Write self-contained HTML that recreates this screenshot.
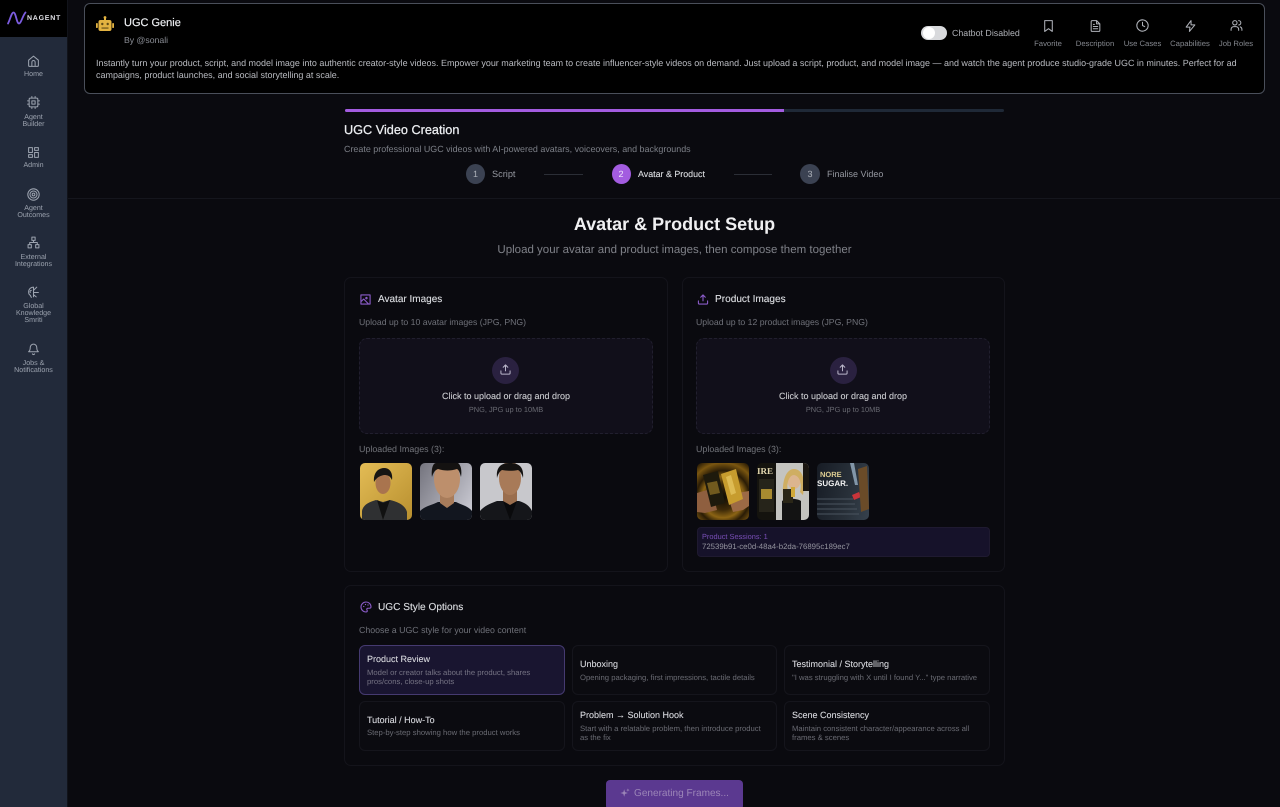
<!DOCTYPE html>
<html lang="en"><head><meta charset="utf-8"><title>UGC Genie</title>
<style>
*{box-sizing:border-box}
html,body{margin:0;padding:0;width:1280px;height:807px;overflow:hidden;background:#0a0a0f}
body{position:relative;font-family:"Liberation Sans",sans-serif;color:#e5e7eb;text-rendering:geometricPrecision}
.a,.t{position:absolute}
.t{white-space:nowrap;line-height:1}
.c{transform:translateX(-50%);text-align:center}
.nav{font-size:7.1px;color:#9ca3af;line-height:7px;text-align:center;width:67px;left:0;white-space:normal}
svg{position:absolute;overflow:visible}
.i{fill:none;stroke-linecap:round;stroke-linejoin:round}
.card{position:absolute;border:1px solid #14141b;border-radius:7px;background:#0a0a0f}
.drop{position:absolute;border:1px dashed #211f2e;border-radius:8px;background:#110f1a}
.circle{position:absolute;width:27px;height:27px;border-radius:50%;background:#2a2140}
.thumb{position:absolute;width:52px;height:57px;border-radius:5px;overflow:hidden}
.sty{position:absolute;border:1px solid #15151c;border-radius:6px;background:#0b0b10}
.h{font-size:9px;color:#d8d9de;-webkit-text-stroke:.1px #d8d9de}
.d{font-size:7.7px;color:#6a6b73}
.top{color:#85888f;font-size:7.7px}
</style></head><body>
<div class="a" style="left:0;top:0;width:67px;height:807px;background:#222a3a"></div>
<div class="a" style="left:0;top:0;width:67px;height:37px;background:#000"></div>
<div class="a" style="left:67px;top:0;width:1px;height:807px;background:#11131a"></div>

<svg style="left:7px;top:11px" width="20" height="14" viewBox="0 0 20 14"><path class="i" stroke="#7c5ce0" stroke-width="1.8" d="M1 12.500 C3 9 4.500 1.500 6.500 1.500 C9 1.500 9.500 12.500 12 12.500 C14 12.500 16 4 18.500 1.500"/></svg>
<div class="t" style="left:27px;top:15px;font-size:7px;font-weight:700;letter-spacing:.75px;color:#e0e0e6">NAGENT</div>

<svg style="left:27px;top:54px" width="13" height="14" viewBox="0 0 24 24"><path class="i" stroke="#9ca3af" stroke-width="1.9" d="M3 10.500 12 3l9 7.500V20a2 2 0 0 1-2 2H5a2 2 0 0 1-2-2Z M9 22v-8a3 3 0 0 1 6 0v8"/></svg>
<div class="t nav" style="top:71px">Home</div>
<svg style="left:27px;top:96px" width="13" height="13" viewBox="0 0 24 24"><path class="i" stroke="#9ca3af" stroke-width="1.9" d="M6 4h12a2 2 0 0 1 2 2v12a2 2 0 0 1-2 2H6a2 2 0 0 1-2-2V6a2 2 0 0 1 2-2Z M9 9h6v6H9Z M9 1v3M15 1v3M9 20v3M15 20v3M20 9h3M20 15h3M1 9h3M1 15h3"/></svg>
<div class="t nav" style="top:114px">Agent<br>Builder</div>
<svg style="left:27px;top:146px" width="13" height="13" viewBox="0 0 24 24"><path class="i" stroke="#9ca3af" stroke-width="1.9" d="M3 3h7v9H3Z M14 3h7v5h-7Z M14 12h7v9h-7Z M3 16h7v5H3Z"/></svg>
<div class="t nav" style="top:162px">Admin</div>
<svg style="left:27px;top:187.500px" width="13" height="13" viewBox="0 0 24 24"><g class="i" stroke="#9ca3af" stroke-width="1.9"><circle cx="12" cy="12" r="10.500"/><circle cx="12" cy="12" r="6.500"/><circle cx="12" cy="12" r="2.500"/></g></svg>
<div class="t nav" style="top:205px">Agent<br>Outcomes</div>
<svg style="left:27px;top:236px" width="13" height="13" viewBox="0 0 24 24"><path class="i" stroke="#9ca3af" stroke-width="1.9" d="M9 2h6v6H9Z M2 16h6v6H2Z M16 16h6v6h-6Z M5 16v-4h14v4M12 8v4"/></svg>
<div class="t nav" style="top:254px">External<br>Integrations</div>
<svg style="left:27px;top:285px" width="13" height="14" viewBox="0 0 24 24"><path class="i" stroke="#9ca3af" stroke-width="1.9" d="M12 3C7 3 3 7 3 12c0 3 1 5 3 6l2 4M12 3v18M12 9l6-6M12 13h9M12 17l5 4M8 9c-2 0-3 2-2 4"/></svg>
<div class="t nav" style="top:303px">Global<br>Knowledge<br>Smriti</div>
<svg style="left:27px;top:342px" width="13" height="14" viewBox="0 0 24 24"><path class="i" stroke="#9ca3af" stroke-width="1.9" d="M6 9a6 6 0 0 1 12 0c0 6 3 8 3 8H3s3-2 3-8M10 21a2.200 2.200 0 0 0 4 0"/></svg>
<div class="t nav" style="top:360px">Jobs &amp;<br>Notifications</div>

<div class="a" style="left:84px;top:3px;width:1181px;height:91px;background:#000;border:1px solid #4a4f5a;border-radius:6px"></div>
<svg style="left:96px;top:16px" width="18" height="16" viewBox="0 0 18 16"><g fill="#e3b341"><rect x="2.500" y="4" width="13" height="11" rx="2"/><rect y="7" width="1.800" height="5" rx=".8"/><rect x="16.200" y="7" width="1.800" height="5" rx=".8"/><rect x="8" y="1.500" width="2" height="3"/><circle cx="9" cy="1.500" r="1.400"/></g><circle cx="6.300" cy="8" r="1.200" fill="#5f4a14"/><circle cx="11.700" cy="8" r="1.200" fill="#5f4a14"/><rect x="5.500" y="11.500" width="7" height="1.100" fill="#5f4a14"/></svg>
<div class="t" style="left:124px;top:18px;font-size:11px;color:#eceef1;-webkit-text-stroke:.2px #eceef1">UGC Genie</div>
<div class="t" style="left:124px;top:35.500px;font-size:8.700px;color:#8a8d95">By @sonali</div>
<div class="t" style="left:96px;top:58.500px;font-size:8.980px;color:#babcc2">Instantly turn your product, script, and model image into authentic creator-style videos. Empower your marketing team to create influencer-style videos on demand. Just upload a script, product, and model image — and watch the agent produce studio-grade UGC in minutes. Perfect for ad</div>
<div class="t" style="left:96px;top:70.500px;font-size:8.980px;color:#babcc2">campaigns, product launches, and social storytelling at scale.</div>

<div class="a" style="left:921px;top:26px;width:26px;height:14px;border-radius:7px;background:#d8d9dc"></div>
<div class="a" style="left:923px;top:27px;width:12px;height:12px;border-radius:50%;background:#fff"></div>
<div class="t" style="left:952px;top:28.500px;font-size:8.850px;color:#b0b2b8">Chatbot Disabled</div>

<svg style="left:1042px;top:19px" width="13" height="14" viewBox="0 0 24 24"><path class="i" stroke="#b0b3ba" stroke-width="1.9" d="M5 2h14v20l-7-5-7 5Z"/></svg>
<svg style="left:1089px;top:19px" width="13" height="14" viewBox="0 0 24 24"><path class="i" stroke="#b0b3ba" stroke-width="1.9" d="M6 2h8l6 6v12a2 2 0 0 1-2 2H6a2 2 0 0 1-2-2V4a2 2 0 0 1 2-2Z M14 2v6h6 M8 13h8M8 17h8M8 9h2"/></svg>
<svg style="left:1136px;top:19px" width="13" height="13" viewBox="0 0 24 24"><g class="i" stroke="#b0b3ba" stroke-width="1.9"><circle cx="12" cy="12" r="10.500"/><path d="M12 6v6l4 2"/></g></svg>
<svg style="left:1184px;top:19px" width="13" height="14" viewBox="0 0 24 24"><path class="i" stroke="#b0b3ba" stroke-width="1.9" d="M13 2 4 14h7l-1 8 10-12h-7Z"/></svg>
<svg style="left:1230px;top:19px" width="13" height="13" viewBox="0 0 24 24"><g class="i" stroke="#b0b3ba" stroke-width="1.9"><circle cx="9" cy="7" r="4"/><path d="M2 21v-2a5 5 0 0 1 5-5h4a5 5 0 0 1 5 5v2M16 3a4 4 0 0 1 0 8M22 21v-2a5 5 0 0 0-3-4.500"/></g></svg>
<div class="t c top" style="left:1048px;top:40px">Favorite</div>
<div class="t c top" style="left:1095px;top:40px">Description</div>
<div class="t c top" style="left:1142.500px;top:40px">Use Cases</div>
<div class="t c top" style="left:1190px;top:40px">Capabilities</div>
<div class="t c top" style="left:1236px;top:40px">Job Roles</div>

<div class="a" style="left:345px;top:109px;width:659px;height:3px;background:#1f2937;border-radius:2px"></div>
<div class="a" style="left:345px;top:109px;width:439px;height:3px;background:#a35ce0;border-radius:2px 0 0 2px"></div>
<div class="t" style="left:344px;top:124px;font-size:12.700px;color:#eceef1;-webkit-text-stroke:.25px #eceef1">UGC Video Creation</div>
<div class="t" style="left:344px;top:144.500px;font-size:8.930px;color:#7d8088">Create professional UGC videos with AI-powered avatars, voiceovers, and backgrounds</div>

<div class="a" style="left:466px;top:164px;width:19px;height:20px;border-radius:50%;background:#3b4252"></div>
<div class="t c" style="left:475.500px;top:170px;font-size:9px;color:#aeb2ba">1</div>
<div class="t" style="left:492px;top:169.500px;font-size:9.200px;color:#94979f">Script</div>
<div class="a" style="left:544px;top:174px;width:39px;height:1px;background:#2b2e36"></div>
<div class="a" style="left:612px;top:164px;width:19px;height:20px;border-radius:50%;background:#a35ce0"></div>
<div class="t c" style="left:621px;top:170px;font-size:9px;color:#f0e6fb">2</div>
<div class="t" style="left:638px;top:169.500px;font-size:8.900px;color:#dcdee2;-webkit-text-stroke:.12px #dcdee2">Avatar &amp; Product</div>
<div class="a" style="left:734px;top:174px;width:38px;height:1px;background:#2b2e36"></div>
<div class="a" style="left:800px;top:164px;width:20px;height:20px;border-radius:50%;background:#3b4252"></div>
<div class="t c" style="left:810px;top:170px;font-size:9px;color:#aeb2ba">3</div>
<div class="t" style="left:827px;top:169.500px;font-size:9px;color:#94979f">Finalise Video</div>

<div class="a" style="left:68px;top:198px;width:1212px;height:1px;background:#15161d"></div>

<div class="t c" style="left:674.500px;top:214.500px;font-size:18px;font-weight:700;color:#f0f0f2">Avatar &amp; Product Setup</div>
<div class="t c" style="left:674.500px;top:245px;font-size:11.500px;color:#7f8188">Upload your avatar and product images, then compose them together</div>

<div class="card" style="left:344px;top:277px;width:324px;height:295px"></div>
<div class="card" style="left:682px;top:277px;width:323px;height:295px"></div>
<div class="card" style="left:344px;top:585px;width:661px;height:181px"></div>

<svg style="left:360px;top:294px" width="11" height="11" viewBox="0 0 24 24"><path class="i" stroke="#8b5cc9" stroke-width="2.400" d="M2 2h20v20H2Z M2 17l6-6 11 11 M14 7.500a1.500 1.500 0 1 0 .1 0"/></svg>
<div class="t" style="left:378px;top:294.500px;font-size:10px;color:#dcdee2;-webkit-text-stroke:.12px #dcdee2">Avatar Images</div>
<div class="t" style="left:359px;top:317.500px;font-size:8.700px;color:#6f7179">Upload up to 10 avatar images (JPG, PNG)</div>
<div class="drop" style="left:359px;top:338px;width:294px;height:96px"></div>
<div class="circle" style="left:492px;top:357px"></div>
<svg style="left:500px;top:364px" width="11" height="11" viewBox="0 0 24 24"><path class="i" stroke="#b9b5c9" stroke-width="2.200" d="M12 15V2M7 7l5-5 5 5M2 15v5a2 2 0 0 0 2 2h16a2 2 0 0 0 2-2v-5"/></svg>
<div class="t c" style="left:506px;top:391.500px;font-size:9px;color:#cdced2;-webkit-text-stroke:.1px #cdced2">Click to upload or drag and drop</div>
<div class="t c" style="left:506px;top:405.500px;font-size:7.400px;color:#6a6b73">PNG, JPG up to 10MB</div>
<div class="t" style="left:359px;top:444.500px;font-size:8.900px;color:#72747a">Uploaded Images (3):</div>

<div class="thumb" style="left:360px;top:462.500px;background:linear-gradient(135deg,#e3bc55,#b88f2f)"><svg width="52" height="57" viewBox="0 0 52 57"><path fill="#2f3032" d="M2 57v-9c1-6 7-9 14-11l7 2 7-2c8 2 15 5 17 12v8Z"/><path fill="#111" d="M17 37l6 20 7-20-7 3Z"/><ellipse cx="23" cy="20" rx="7.500" ry="11" fill="#a9744e"/><path fill="#171513" d="M14 19c-1-9 4-14 10-14s9 5 8 12c-2-4-4-5-8-5-4 1-7 2-10 7Z"/></svg></div>
<div class="thumb" style="left:420px;top:462.500px;background:linear-gradient(120deg,#74747e,#cfcfd8)"><svg width="52" height="57" viewBox="0 0 52 57"><path fill="#12161f" d="M0 57v-9c5-5 12-6 18-9h18c6 3 12 4 16 9v9Z"/><path fill="#a87c5b" d="M20 30h14v10l-7 5-7-5Z"/><ellipse cx="27" cy="16" rx="13" ry="19" fill="#bd8f6c"/><path fill="#141211" d="M12 14c-1-8 1-14 4-14h22c3 2 4 8 3 14-1-4-2-7-4-8-6 2-13 2-19 0-3 1-5 4-6 8Z"/></svg></div>
<div class="thumb" style="left:480px;top:462.500px;background:#c8c8cc"><svg width="52" height="57" viewBox="0 0 52 57"><path fill="#15161a" d="M0 57v-9c5-6 12-8 17-10h22c6 2 10 4 13 10v9Z"/><path fill="#0a0a0c" d="M23 38l7 19 7-19-7 3Z"/><path fill="#9a6e4e" d="M23 28h14v10l-7 4-7-4Z"/><ellipse cx="30" cy="15" rx="11" ry="17" fill="#a87a58"/><path fill="#131110" d="M17 15c-1-10 3-15 13-15s14 5 13 15c-1-4-3-7-5-8-5 1-11 1-16 0-2 1-4 4-5 8Z"/></svg></div>

<svg style="left:697px;top:294px" width="12" height="11" viewBox="0 0 24 24"><path class="i" stroke="#8b5cc9" stroke-width="2.400" d="M12 15V2M7 7l5-5 5 5M2 15v5a2 2 0 0 0 2 2h16a2 2 0 0 0 2-2v-5"/></svg>
<div class="t" style="left:715px;top:294.500px;font-size:10.100px;color:#dcdee2;-webkit-text-stroke:.12px #dcdee2">Product Images</div>
<div class="t" style="left:696px;top:317.500px;font-size:8.700px;color:#6f7179">Upload up to 12 product images (JPG, PNG)</div>
<div class="drop" style="left:696px;top:338px;width:294px;height:96px"></div>
<div class="circle" style="left:830px;top:357px"></div>
<svg style="left:837px;top:364px" width="11" height="11" viewBox="0 0 24 24"><path class="i" stroke="#b9b5c9" stroke-width="2.200" d="M12 15V2M7 7l5-5 5 5M2 15v5a2 2 0 0 0 2 2h16a2 2 0 0 0 2-2v-5"/></svg>
<div class="t c" style="left:843px;top:391.500px;font-size:9px;color:#cdced2;-webkit-text-stroke:.1px #cdced2">Click to upload or drag and drop</div>
<div class="t c" style="left:843px;top:405.500px;font-size:7.400px;color:#6a6b73">PNG, JPG up to 10MB</div>
<div class="t" style="left:696px;top:444.500px;font-size:8.900px;color:#72747a">Uploaded Images (3):</div>

<div class="thumb" style="left:697px;top:462.500px;background:radial-gradient(circle at 50% 60%,#0e0a04 0,#3e2a08 30%,#8c6414 48%,#2a1c06 62%,#7a5610 80%,#140c02)"><svg width="52" height="57" viewBox="0 0 52 57"><path fill="#8f5f3f" d="M0 30l10-3 8 12 2 8-12 3-8-1Z"/><path fill="#9c6a45" d="M52 28l-12 2-7 10 3 9 10-2 6-4Z"/><path fill="#1e1a0c" d="M6 12l15-4 7 32-14 4Z"/><path fill="#c79c2e" d="M24 11l15-5 7 30-14 6Z"/><path fill="#ecd06c" d="M29 14l5-2 5 18-5 2Z" opacity=".6"/><path fill="#a8862c" d="M10 20l10-2 3 12-10 2Z" opacity=".6"/></svg></div>
<div class="thumb" style="left:757px;top:462.500px;background:linear-gradient(90deg,#14130e 37%,#c4c4c0 37%)"><svg width="52" height="57" viewBox="0 0 52 57"><text x="0" y="11" font-size="9" font-weight="700" fill="#e4d9b0" font-family="Liberation Serif,serif">IRE</text><path fill="#26241a" d="M2 16h15v33H2Z"/><path fill="#a88a30" d="M4 26h11v10H4Z"/><path fill="#131313" d="M25 57V38c4-3 15-3 19 0v19Z"/><ellipse cx="37" cy="16" rx="7" ry="10" fill="#dcb58f"/><path fill="#cfae62" d="M26 32c-1-14 3-26 11-26s12 10 9 26l-3-3c2-8 0-16-6-17-5 0-8 9-6 17Z"/><path fill="#2a2617" d="M26 26h10v14H26Z"/><path fill="#d0a838" d="M34 24h4v10h-4Z"/><path fill="#1a1611" d="M46 0h6v28h-6Z"/></svg></div>
<div class="thumb" style="left:817px;top:462.500px;background:linear-gradient(100deg,#171c25,#283039 60%,#36414d)"><svg width="52" height="57" viewBox="0 0 52 57"><text x="3" y="14" font-size="7.500" font-weight="700" fill="#e0cf93" font-family="Liberation Sans,sans-serif">NORE</text><text x="0" y="23" font-size="8" font-weight="700" fill="#f4f4f4" font-family="Liberation Sans,sans-serif">SUGAR.</text><path stroke="#4a545f" stroke-width="1" d="M0 36h36M0 41h38M0 46h40M0 51h42"/><path fill="#c8343a" d="M35 32l7-3 2 5-7 3Z"/><path fill="#6a4b28" d="M41 6l9-3 2 43-8 3Z"/><path fill="#8296a8" d="M33 0h4l4 22h-3Z"/></svg></div>

<div class="a" style="left:697px;top:527px;width:293px;height:30px;border:1px solid #1f1a30;border-radius:4px;background:#16122a"></div>
<div class="t" style="left:702px;top:532.500px;font-size:7.400px;color:#7a4fb8">Product Sessions: 1</div>
<div class="t" style="left:702px;top:542.500px;font-size:7.800px;color:#93939d">72539b91-ce0d-48a4-b2da-76895c189ec7</div>

<svg style="left:360px;top:601px" width="12" height="12" viewBox="0 0 24 24"><path class="i" stroke="#8b5cc9" stroke-width="2.200" d="M12 2a10 10 0 0 0 0 20c1.700 0 2.500-1 2.500-2.200 0-1.600-1-2-1-3.300 0-1.200 1-2 2.200-2H19a3 3 0 0 0 3-3C22 6 17.500 2 12 2Z"/><circle cx="7.500" cy="11" r="1.300" fill="#8b5cc9"/><circle cx="11" cy="7" r="1.300" fill="#8b5cc9"/><circle cx="16" cy="8" r="1.300" fill="#8b5cc9"/></svg>
<div class="t" style="left:378px;top:602.500px;font-size:10.100px;color:#dcdee2;-webkit-text-stroke:.12px #dcdee2">UGC Style Options</div>
<div class="t" style="left:359px;top:625.500px;font-size:8.800px;color:#6f7179">Choose a UGC style for your video content</div>

<div class="sty" style="left:359px;top:645px;width:206px;height:50px;background:#191530;border-color:#453a70"></div>
<div class="t h" style="left:367px;top:655px">Product Review</div>
<div class="t d" style="left:367px;top:667.500px;line-height:9.500px;color:#757383">Model or creator talks about the product, shares<br>pros/cons, close-up shots</div>

<div class="sty" style="left:572px;top:645px;width:205px;height:50px"></div>
<div class="t h" style="left:580px;top:660px">Unboxing</div>
<div class="t d" style="left:580px;top:673.500px">Opening packaging, first impressions, tactile details</div>

<div class="sty" style="left:784px;top:645px;width:206px;height:50px"></div>
<div class="t h" style="left:792px;top:660px">Testimonial / Storytelling</div>
<div class="t d" style="left:792px;top:673.500px">"I was struggling with X until I found Y..." type narrative</div>

<div class="sty" style="left:359px;top:701px;width:206px;height:50px"></div>
<div class="t h" style="left:367px;top:715.500px">Tutorial / How-To</div>
<div class="t d" style="left:367px;top:729px">Step-by-step showing how the product works</div>

<div class="sty" style="left:572px;top:701px;width:205px;height:50px"></div>
<div class="t h" style="left:580px;top:711px">Problem → Solution Hook</div>
<div class="t d" style="left:580px;top:723.500px;line-height:9.500px">Start with a relatable problem, then introduce product<br>as the fix</div>

<div class="sty" style="left:784px;top:701px;width:206px;height:50px"></div>
<div class="t h" style="left:792px;top:711px">Scene Consistency</div>
<div class="t d" style="left:792px;top:723.500px;line-height:9.500px">Maintain consistent character/appearance across all<br>frames &amp; scenes</div>

<div class="a" style="left:606px;top:780px;width:137px;height:30px;border-radius:4px;background:#5b3990"></div>
<svg style="left:620px;top:788px" width="10" height="10" viewBox="0 0 24 24"><path fill="#9c86b8" d="M10 3l2 7 7 2-7 2-2 7-2-7-7-2 7-2Z M19 1l1 3 3 1-3 1-1 3-1-3-3-1 3-1Z"/></svg>
<div class="t" style="left:634px;top:789px;font-size:10.050px;color:#9c86b8">Generating Frames...</div>
</body></html>
